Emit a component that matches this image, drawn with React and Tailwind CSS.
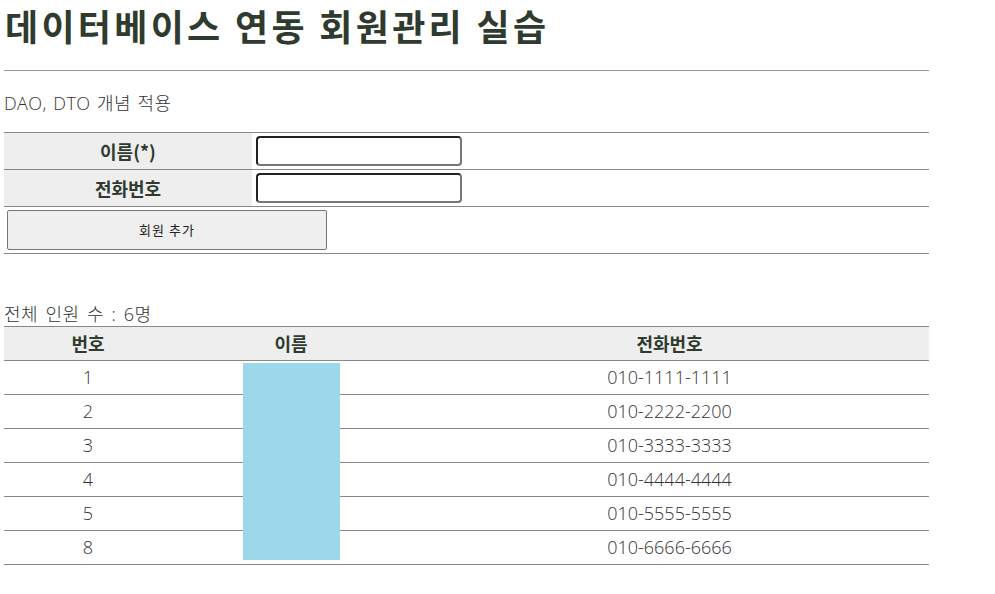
import React from "react";

const font = { fontFamily: '"Open Sans", "Noto Sans CJK KR", sans-serif' };

const members = [
  { no: "1", tel: "010-1111-1111" },
  { no: "2", tel: "010-2222-2200" },
  { no: "3", tel: "010-3333-3333" },
  { no: "4", tel: "010-4444-4444" },
  { no: "5", tel: "010-5555-5555" },
  { no: "8", tel: "010-6666-6666" },
];

export default function App() {
  return (
    <div className="w-[995px] h-[594px] bg-white text-[#333] font-['Open_Sans','Noto_Sans_CJK_KR',sans-serif]" style={font}>
      <div className="pl-[4px] w-[929px]">
        <h1 className="pl-[1px] pt-[1px] text-[36px] leading-[48px] font-bold text-[#2e3b2e] font-['Noto_Sans_CJK_KR',sans-serif] tracking-[3.3px] whitespace-nowrap">
          데이터베이스 연동 회원관리 실습
        </h1>
        <div className="mt-[21px] border-t border-[#999]" />
        <p className="mt-[20px] h-[24px] text-[18px] leading-[24px] font-light tracking-[0.4px] [word-spacing:1.5px]">DAO, DTO 개념 적용</p>

        <div className="mt-[17px] border-t border-[#888]">
          <div className="flex h-[37px] border-b border-[#888]">
            <div className="w-[248px] bg-[#eeeeee] flex items-center justify-center text-[18px] font-bold text-[#2e3b2e] font-['Noto_Sans_CJK_KR',sans-serif]">
              이름(*)
            </div>
            <div className="flex items-center pl-[4px]">
              <input className="w-[206px] h-[30px] rounded-[4px] border-2 border-t-[#222] border-l-[#222] border-b-[#777] border-r-[#777] bg-white" />
            </div>
          </div>
          <div className="flex h-[37px] border-b border-[#888]">
            <div className="w-[248px] bg-[#eeeeee] flex items-center justify-center text-[18px] font-bold text-[#2e3b2e] font-['Noto_Sans_CJK_KR',sans-serif]">
              전화번호
            </div>
            <div className="flex items-center pl-[4px]">
              <input className="w-[206px] h-[30px] rounded-[4px] border-2 border-t-[#222] border-l-[#222] border-b-[#777] border-r-[#777] bg-white" />
            </div>
          </div>
          <div className="h-[47px] border-b border-[#888] flex items-center pl-[3px]">
            <button className="w-[320px] h-[40px] rounded-[2px] border border-[#767676] bg-[#efefef] text-[13px] tracking-[1px] text-[#222] font-['Noto_Sans_CJK_KR',sans-serif]">
              회원 추가
            </button>
          </div>
        </div>

        <p className="mt-[48px] h-[24px] text-[18px] leading-[24px] font-light tracking-[0.4px] [word-spacing:2.5px]">전체 인원 수 : 6명</p>

        <div className="relative border-t border-[#888]">
          <div className="grid grid-cols-[168px_238px_519px] h-[34px] bg-[#eeeeee] border-b border-[#888] text-[18px] font-bold text-[#2e3b2e] font-['Noto_Sans_CJK_KR',sans-serif]">
            <div className="flex items-center justify-center">번호</div>
            <div className="flex items-center justify-center">이름</div>
            <div className="flex items-center justify-center">전화번호</div>
          </div>
          {members.map((m) => (
            <div key={m.no} className="grid grid-cols-[168px_238px_519px] h-[34px] border-b border-[#888] text-[18px] font-light">
              <div className="flex items-center justify-center">{m.no}</div>
              <div />
              <div className="flex items-center justify-center">{m.tel}</div>
            </div>
          ))}
          <div className="absolute left-[239px] top-[36px] w-[97px] h-[197px] bg-[#9bd8ea]" />
        </div>
      </div>
    </div>
  );
}
